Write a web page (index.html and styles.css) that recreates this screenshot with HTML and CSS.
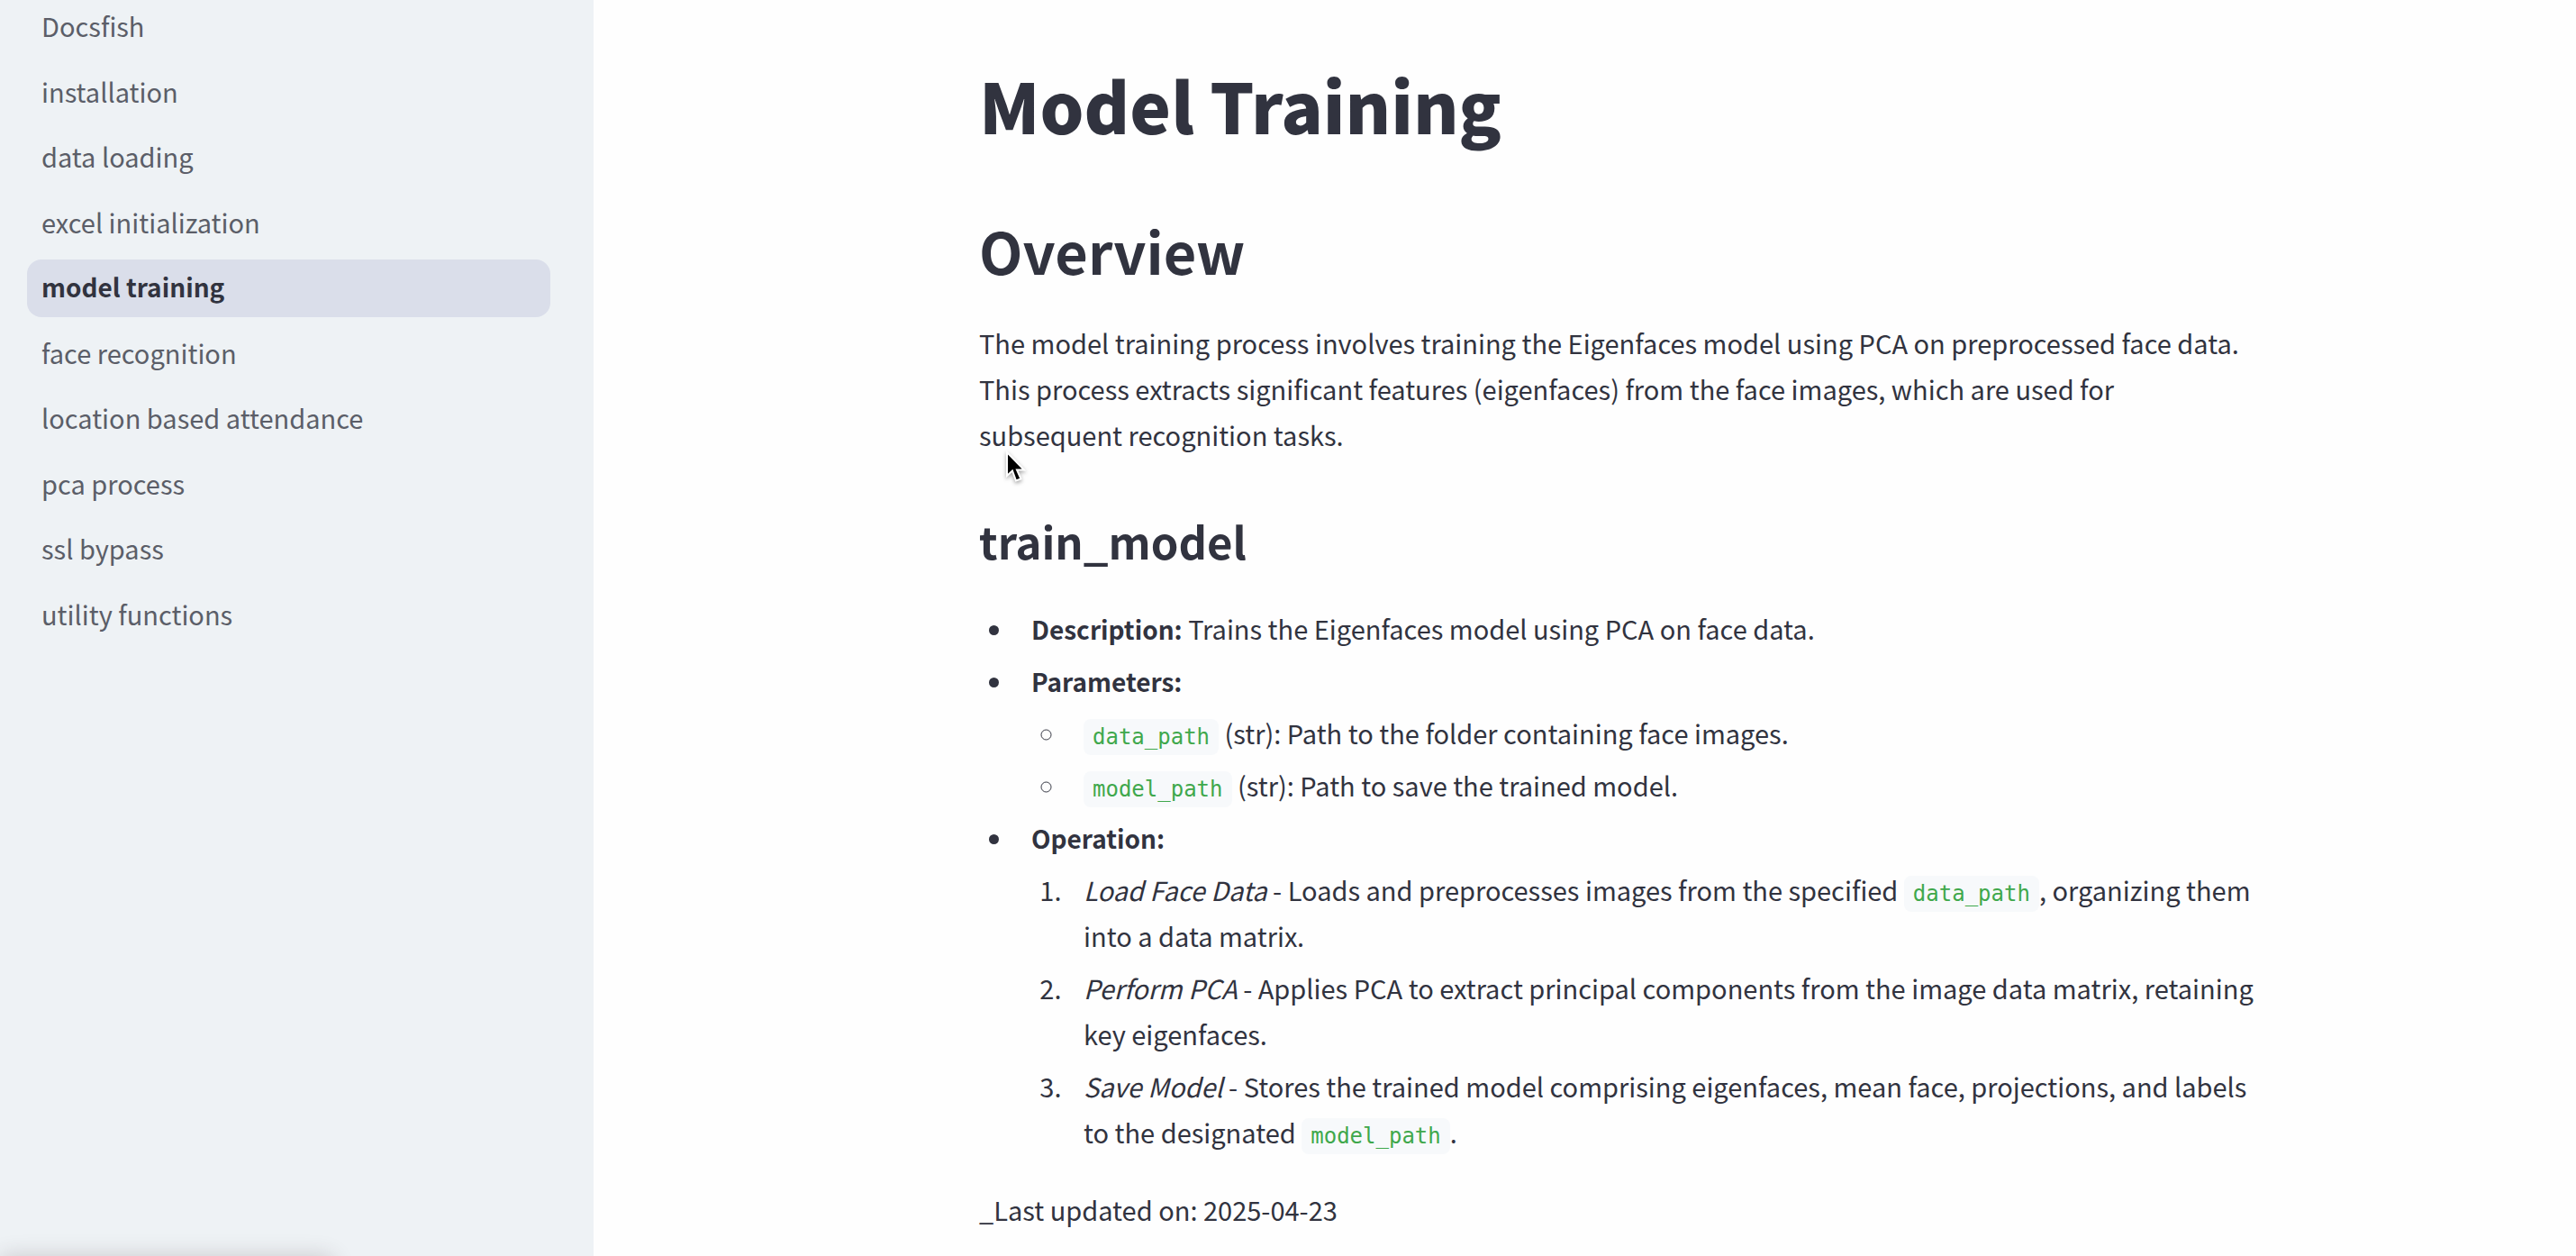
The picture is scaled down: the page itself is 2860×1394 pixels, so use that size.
FILE: index.html
```html
<!DOCTYPE html>
<html lang="en">
<head>
<meta charset="utf-8">
<title>Model Training</title>
<meta name="viewport" content="width=device-width, initial-scale=1">
<link rel="stylesheet" href="styles.css">
</head>
<body>
<div class="app">
  <aside class="sidebar">
    <nav class="nav" aria-label="Pages">
      <a class="nav-link" href="#">Docsfish</a>
      <a class="nav-link" href="#">installation</a>
      <a class="nav-link" href="#">data loading</a>
      <a class="nav-link" href="#">excel initialization</a>
      <a class="nav-link nav-link-active" href="#" aria-current="page">model training</a>
      <a class="nav-link" href="#">face recognition</a>
      <a class="nav-link" href="#">location based attendance</a>
      <a class="nav-link" href="#">pca process</a>
      <a class="nav-link" href="#">ssl bypass</a>
      <a class="nav-link" href="#">utility functions</a>
    </nav>
    <div class="status-shadow"></div>
  </aside>
  <main class="main">
    <article class="doc">
      <h1 class="title">Model Training</h1>
      <h2 class="section">Overview</h2>
      <p class="text">The model training process involves training the Eigenfaces model using PCA on preprocessed face data. This process extracts significant features (eigenfaces) from the face images, which are used for subsequent recognition tasks.</p>
      <h3 class="subsection">train_model</h3>
      <ul class="list">
        <li><strong>Description:</strong> Trains the Eigenfaces model using PCA on face data.</li>
        <li><strong>Parameters:</strong>
          <ul class="list">
            <li><code>data_path</code> (str): Path to the folder containing face images.</li>
            <li><code>model_path</code> (str): Path to save the trained model.</li>
          </ul>
        </li>
        <li><strong>Operation:</strong>
          <ol class="list">
            <li><em>Load Face Data</em> - Loads and preprocesses images from the specified <code>data_path</code>, organizing them into a data matrix.</li>
            <li><em>Perform PCA</em> - Applies PCA to extract principal components from the image data matrix, retaining key eigenfaces.</li>
            <li><em>Save Model</em> - Stores the trained model comprising eigenfaces, mean face, projections, and labels to the designated <code>model_path</code>.</li>
          </ol>
        </li>
      </ul>
      <p class="updated">_Last updated on: 2025-04-23</p>
    </article>
  </main>
</div>
<svg class="cursor" width="26" height="40" viewBox="0 0 26 40" aria-hidden="true">
  <path d="M3 2 V28 L9 22.500 L13 33.500 L18.500 31.500 L14 21.500 H22 Z" fill="#000" stroke="#fff" stroke-width="2"/>
</svg>
</body>
</html>
```
FILE: styles.css
```css
* { box-sizing: border-box; }
body {
  margin: 0;
  background: #fefefe;
  color: #31333f;
  font-family: "Noto Sans CJK SC", sans-serif;
  font-size: 29px;
  line-height: 51px;
}

.app {
  display: grid;
  grid-template-columns: 659px 1fr;
  min-height: 100vh;
}

/* Sidebar */
.sidebar {
  position: relative;
  overflow: hidden;
  background: #eef2f5;
  padding: 0 48px 0 30px;
}
.nav {
  display: flex;
  flex-direction: column;
  justify-content: space-between;
  min-height: 717px;
  margin-top: -2px;
}
.nav-link {
  padding: 0 16px 4px;
  border-radius: 16px;
  color: #5b5e68;
  line-height: 60px;
  text-decoration: none;
}
.nav-link-active {
  background: #dadeea;
  color: #31333f;
  font-size: 28px;
  font-weight: 700;
}
.status-shadow {
  position: absolute;
  bottom: -40px;
  left: 0;
  width: 370px;
  height: 40px;
  border-radius: 8px;
  box-shadow: 0 0 24px rgba(60, 40, 50, 0.2);
}

/* Document */
.main { padding: 68px 0 0 428px; }
.doc { max-width: 1415px; }
h1, h2, h3, p { margin: 0; }
.title {
  font-size: 77px;
  line-height: 96px;
  font-weight: 900;
}
.section {
  margin: 70px 0 33px;
  font-size: 63px;
  line-height: 88px;
  font-weight: 700;
}
.subsection {
  margin: 60px 0 40px;
  font-size: 49px;
  line-height: 64px;
  font-weight: 700;
}
.list {
  margin: 0;
  padding-left: 40px;
}
.list li {
  margin-top: 7px;
  padding-left: 18px;
}
strong {
  font-size: 28px;
  line-height: 48px;
}
code {
  padding: 6px 10px;
  border-radius: 8px;
  background: #f7f9fb;
  color: #3fa84c;
  font-family: "DejaVu Sans Mono", monospace;
  font-size: 24px;
  line-height: 24px;
}
.updated { margin-top: 35px; }

.cursor {
  position: absolute;
  top: 500px;
  left: 1115px;
  filter: drop-shadow(0 2px 2px rgba(0, 0, 0, 0.35));
}
```
